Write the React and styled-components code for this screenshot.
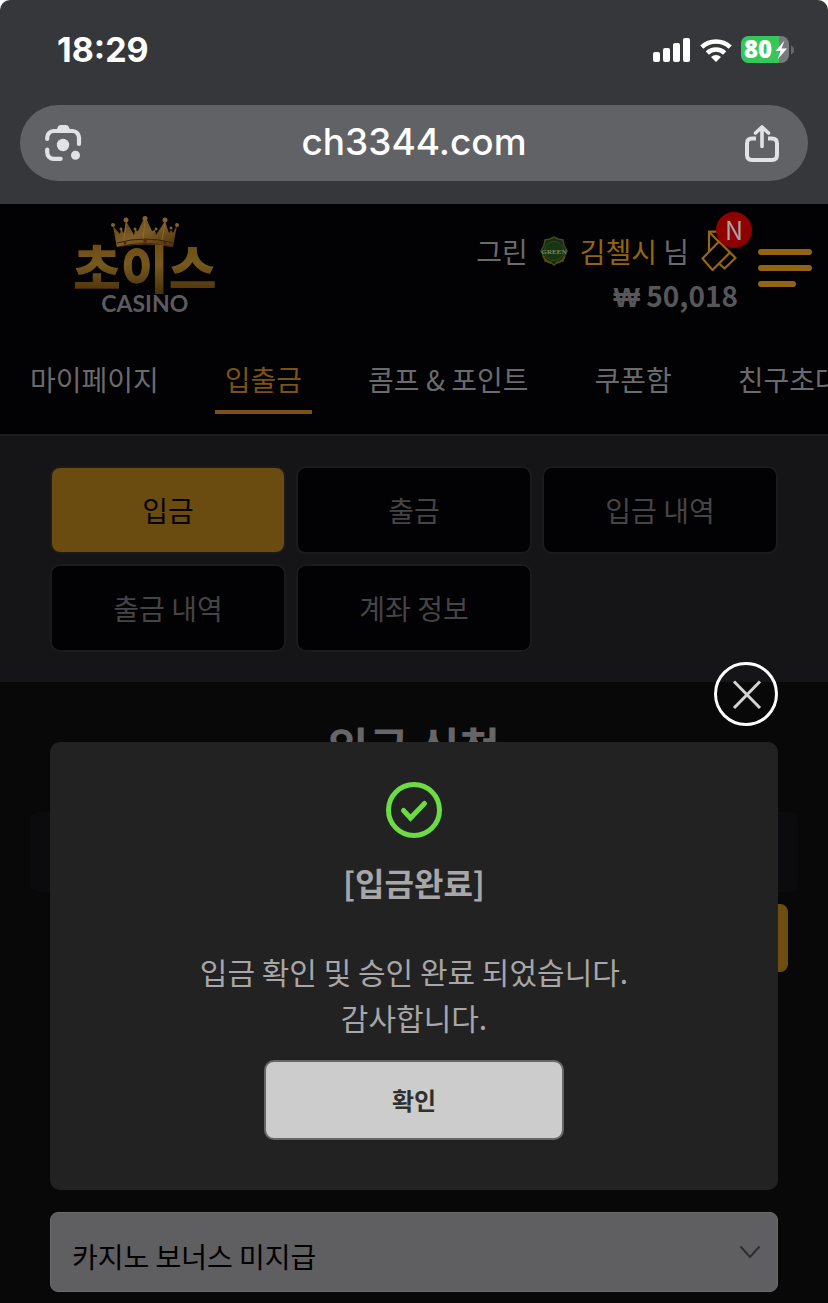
import React from "react";
import styled, { createGlobalStyle } from "styled-components";

const GlobalStyle = createGlobalStyle`
    *, *::before, *::after {
        box-sizing: border-box;
    }
    body {
        margin: 0;
        background: #fff;
        font-family: "Noto Sans CJK KR", sans-serif;
        font-size: 28px;
    }
    button, select {
        font: inherit;
    }
    h1, h2, p {
        margin: 0;
    }
`;

const Page = styled.div`
    --gold: #6a4b10;
    --gold-bright: #936512;
    --line: #1b1b1c;

    display: flex;
    flex-direction: column;
    min-height: 100vh;
    border-radius: 10px 10px 0 0;
    background: #36373b;
    overflow: hidden;
`;

/* browser chrome */

const StatusBar = styled.div`
    display: flex;
    align-items: center;
    justify-content: space-between;
    height: 105px;
    padding: 0 33px 6px 57px;
    color: #fff;
    font-family: Inter, sans-serif;
`;

const Clock = styled.time`
    font-size: 34px;
    font-weight: 700;
`;

const StatusIcons = styled.div`
    display: flex;
    align-items: center;
    gap: 9px;
`;

const AddressBar = styled.div`
    display: flex;
    align-items: center;
    justify-content: space-between;
    height: 76px;
    margin: 0 20px 23px;
    padding: 0 24px;
    border-radius: 38px;
    background: #616266;
`;

const Host = styled.span`
    color: #fff;
    font-family: Inter, sans-serif;
    font-size: 37px;
    font-weight: 500;
    line-height: 72px;
    padding-bottom: 2px;
`;

const IconButton = styled.button`
    display: flex;
    padding: 0;
    border: 0;
    background: none;
    color: #e2e2e6;
    cursor: pointer;
`;

/* site */

const Site = styled.div`
    position: relative;
    flex: 1;
    background: #090809;
`;

const Header = styled.header`
    display: flex;
    align-items: flex-start;
    height: 156px;
    padding: 0 16px 0 73px;
    background: #020103;
`;

const Logo = styled.a`
    display: flex;
    flex-direction: column;
    align-items: center;
    padding-top: 12px;
    margin-right: auto;
    text-decoration: none;
`;

const LogoName = styled.span`
    margin-top: -10px;
    background: linear-gradient(#6d4a12, #76591f 45%, #4a300a);
    background-clip: text;
    color: transparent;
    font-size: 52px;
    font-weight: 900;
    line-height: 54px;
`;

const LogoSub = styled.span`
    margin-top: -2px;
    color: #5c5b5e;
    font-family: Lato, sans-serif;
    font-size: 23px;
    font-weight: 700;
    line-height: 22px;
`;

const Account = styled.div`
    display: flex;
    flex-direction: column;
    align-items: flex-end;
    padding-top: 25px;
    line-height: 44px;
    color: #6b6a6d;
`;

const AccountRow = styled.div`
    display: flex;
    align-items: center;
    gap: 12px;
`;

const UserName = styled.strong`
    color: var(--gold-bright);
    font-weight: 400;
`;

const Balance = styled.div`
    color: #575659;
    font-weight: 700;
`;

const Won = styled.span`
    font-family: "Open Sans", sans-serif;
    font-weight: 600;
`;

const Coupon = styled.a`
    position: relative;
    display: flex;
`;

const CouponBadge = styled.span`
    position: absolute;
    top: -17px;
    right: -14px;
    width: 36px;
    height: 36px;
    border-radius: 50%;
    background: #8f0000;
    color: #a5a4a6;
    font-size: 25px;
    line-height: 34px;
    text-align: center;
`;

const MenuButton = styled.button`
    display: flex;
    flex-direction: column;
    gap: 10px;
    width: 54px;
    margin: 45px 0 0 20px;
    padding: 0;
    border: 0;
    background: none;
    cursor: pointer;
`;

const MenuLine = styled.span`
    width: ${(props) => (props.$short ? "38px" : "100%")};
    height: 6px;
    border-radius: 3px;
    background: var(--gold-bright);
`;

const Nav = styled.nav`
    display: flex;
    gap: 46px;
    padding: 0 0 20px 20px;
    background: #020103;
    overflow: hidden;
`;

const NavLink = styled.a`
    flex: none;
    padding: 0 10px 12px;
    border-bottom: 4px solid ${(props) => (props.$active ? "#7a5215" : "transparent")};
    color: ${(props) => (props.$active ? "#7a5215" : "#6b6a6c")};
    line-height: 38px;
    text-decoration: none;
    white-space: nowrap;
`;

const Tabs = styled.div`
    display: grid;
    grid-template-columns: repeat(3, 1fr);
    gap: 10px;
    padding: 30px 50px;
    border-top: 2px solid var(--line);
    background: #151416;
`;

const Tab = styled.button`
    height: 88px;
    padding: 0;
    border: 2px solid var(--line);
    border-radius: 10px;
    background: ${(props) => (props.$active ? "var(--gold)" : "#020103")};
    color: ${(props) => (props.$active ? "#050300" : "#454446")};
    cursor: pointer;
`;

const Content = styled.main`
    padding: 32px 30px 11px;
`;

const Title = styled.h1`
    color: #666567;
    font-size: 44px;
    font-weight: 700;
    line-height: 64px;
    text-align: center;
`;

const Field = styled.div`
    height: 80px;
    margin: 34px 0 12px;
    border-radius: 8px;
    background: #0b0a0c;
`;

const AmountButton = styled.button`
    display: block;
    width: 140px;
    height: 68px;
    margin: 0 10px 0 auto;
    border: 0;
    border-radius: 8px;
    background: #6f4d10;
`;

const SelectBox = styled.div`
    position: relative;
    margin: 240px 20px 0;
    color: #2d2c2e;

    select {
        display: block;
        width: 100%;
        height: 80px;
        padding: 8px 60px 0 21px;
        border: 1px solid #6b6a6c;
        border-radius: 8px;
        appearance: none;
        background: #5f5e60;
        color: #000;
    }
    svg {
        position: absolute;
        top: 32px;
        right: 16px;
        pointer-events: none;
    }
`;

/* dialog */

const Overlay = styled.div`
    position: absolute;
    inset: 0;
    display: flex;
    flex-direction: column;
    gap: 16px;
    padding: 458px 50px 0;
`;

const CloseButton = styled(IconButton)`
    align-self: flex-end;
    color: #fff;
`;

const Dialog = styled.section`
    display: flex;
    flex-direction: column;
    align-items: center;
    padding: 40px 20px 50px;
    border-radius: 10px;
    background: #232223;
    color: #a7a6a8;
    text-align: center;
`;

const DialogTitle = styled.h2`
    margin-top: 20px;
    font-size: 32px;
    font-weight: 700;
    line-height: 48px;
`;

const DialogText = styled.p`
    margin: 42px 0 20px;
    font-size: 30px;
    line-height: 46px;
`;

const ConfirmButton = styled.button`
    width: 300px;
    max-width: 100%;
    height: 80px;
    padding: 0 0 2px;
    border: 2px solid #666567;
    border-radius: 10px;
    background: #ccc;
    color: #2f2f2f;
    font-size: 24px;
    font-weight: 700;
    cursor: pointer;
`;

const SignalIcon = () => (
    <svg width='38' height='24' viewBox='0 0 38 24' fill='currentColor'>
        <rect x='0' y='14' width='7' height='10' rx='2' />
        <rect x='10' y='10' width='7' height='14' rx='2' />
        <rect x='20' y='5' width='7' height='19' rx='2' />
        <rect x='30' y='0' width='7' height='24' rx='2' />
    </svg>
);

const WifiIcon = () => (
    <svg width='32' height='24' viewBox='0 0 32 24' fill='none' stroke='currentColor' strokeWidth='4.6'>
        <path d='M1.8 9.2a20.5 20.5 0 0 1 28.4 0' />
        <path d='M7.3 15a12.6 12.6 0 0 1 17.4 0' />
        <path d='M16 24l-5-5a7.4 7.4 0 0 1 10 0z' fill='currentColor' stroke='none' />
    </svg>
);

const BatteryIcon = () => (
    <svg width='54' height='28' viewBox='0 0 54 28'>
        <defs>
            <clipPath id='battery'>
                <rect y='0' width='48' height='27' rx='8' />
            </clipPath>
        </defs>
        <g clipPath='url(#battery)'>
            <rect width='48' height='27' fill='#7a7a7d' />
            <rect width='38' height='27' fill='#35c759' />
        </g>
        <path d='M50 9.5q3 1 3 4.5t-3 4.5z' fill='#69696c' />
        <text x='3' y='22' fill='#fff' fontFamily='Open Sans, sans-serif' fontSize='24' fontWeight='800'>
            80
        </text>
        <path d='M43.5 4.5L34.5 15h5l-3 8.5L46 12.5h-5.5z' fill='#fff' />
    </svg>
);

const LensIcon = () => (
    <svg width='44' height='38' viewBox='0 0 44 38' fill='none' stroke='currentColor' strokeWidth='4.2' strokeLinecap='round'>
        <path d='M3.2 15v-1.5a6.5 6.5 0 0 1 6.5-6.5h18.8a6.5 6.5 0 0 1 6.5 6.5V20' />
        <path d='M12 7.5l1.8-4.6Q14.5 1 16.5 1h5.5q2 0 2.8 1.9L27 7.5z' fill='currentColor' stroke='none' />
        <path d='M3.2 25.5v2.8a6.5 6.5 0 0 0 6.5 6.5h7' />
        <circle cx='19' cy='21' r='6.2' fill='currentColor' stroke='none' />
        <circle cx='31.5' cy='31.3' r='4.5' fill='currentColor' stroke='none' />
    </svg>
);

const ShareIcon = () => (
    <svg width='44' height='38' viewBox='0 0 44 38' fill='none' stroke='currentColor' strokeWidth='4' strokeLinecap='round' strokeLinejoin='round'>
        <path d='M16 14.5h-4q-5 0-5 5V31q0 5 5 5h20q5 0 5-5V19.5q0-5-5-5h-4' strokeLinecap='butt' />
        <path d='M22 22.5V3.5M15.5 9L22 3l6.5 6' strokeWidth='3.6' />
    </svg>
);

const CrownIcon = () => (
    <svg width='68' height='34' viewBox='0 0 68 34'>
        <defs>
            <linearGradient id='crown' x1='0' y1='0' x2='1' y2='1'>
                <stop offset='0' stopColor='#5c3a10' />
                <stop offset='.5' stopColor='#7d5e28' />
                <stop offset='1' stopColor='#4a2e0a' />
            </linearGradient>
        </defs>
        <path
            d='M6 32L2 10l7 8 1-5 3 4 2-12 8 14 1-5 3 1 7-15 7 15 3-1 1 5 9-14 4 12 2-3 2 3 4-8-4 22q-27-5-56 0z'
            fill='url(#crown)'
        />
        <path d='M6 27q28-8 56 0M7 31q28-7 54 0' fill='none' stroke='#382207' strokeWidth='1' />
        <path d='M15 7l-2 17M34 5l-2 18M54 7l-3 17' fill='none' stroke='#8a6a30' strokeWidth='1' />
        <g fill='#85602a'>
            <circle cx='2' cy='9' r='2' />
            <circle cx='15' cy='4' r='2.5' />
            <circle cx='34' cy='2.5' r='2.5' />
            <circle cx='54' cy='4' r='2.5' />
            <circle cx='66' cy='9' r='2' />
            <circle cx='10' cy='13' r='1.5' />
            <circle cx='24' cy='13' r='1.5' />
            <circle cx='45' cy='13' r='1.5' />
            <circle cx='60' cy='12' r='1.5' />
        </g>
        <g fill='#5e2119'>
            <circle cx='14' cy='27' r='1.5' />
            <circle cx='34' cy='25' r='1.8' />
            <circle cx='54' cy='27' r='1.5' />
        </g>
    </svg>
);

const GradeIcon = () => (
    <svg width='28' height='30' viewBox='0 0 28 30'>
        <path
            d='M14 1l4 2 5 1 1 5 3 6-3 6-1 4-5 1-4 3-4-3-5-1-1-4-3-6 3-6 1-5 5-1z'
            fill='#162c13'
            stroke='#3f4a22'
            strokeWidth='1.5'
        />
        <circle cx='14' cy='15' r='9.5' fill='#17350f' stroke='#2c4d24' />
        <path d='M3 20q3 6 9 7M25 20q-3 6-9 7' fill='none' stroke='#5a4313' strokeWidth='2' />
        <text x='14' y='17.5' fill='#7c8370' fontFamily='Liberation Serif, serif' fontSize='7' fontWeight='700' textAnchor='middle'>
            GREEN
        </text>
    </svg>
);

const CouponIcon = () => (
    <svg width='37' height='44' viewBox='0 0 37 44' fill='none' stroke='#946712' strokeWidth='2.2' strokeLinejoin='round'>
        <path d='M1.5 29.5L18 12.5 29 23.5 11.5 41z' />
        <path d='M18 34.5l5.5 5L34.5 29l-6.5-6.5' />
        <path d='M8 22.5V2.7h12M8 2.7L19 14' />
    </svg>
);

const CloseIcon = () => (
    <svg width='64' height='64' viewBox='0 0 64 64' fill='none' stroke='currentColor'>
        <circle cx='32' cy='32' r='30.5' strokeWidth='3' />
        <path d='M20 19.5l26 26.5M46 19.5L20 46' stroke='#d4d4d4' strokeWidth='3' />
    </svg>
);

const CheckIcon = () => (
    <svg width='56' height='56' viewBox='0 0 56 56' fill='none' stroke='#6bdc43' strokeWidth='5'>
        <circle cx='28' cy='28' r='25.5' />
        <path d='M17.5 28.5l7 7.5L38.5 21.500' strokeLinecap='round' />
    </svg>
);

const ChevronIcon = () => (
    <svg width='24' height='16' viewBox='0 0 24 16' fill='none' stroke='currentColor' strokeWidth='2'>
        <path d='M2.5 2.5L12 13l9.5-10.5' />
    </svg>
);

const navItems = ["마이페이지", "입출금", "콤프 & 포인트", "쿠폰함", "친구초대"];
const tabItems = ["입금", "출금", "입금 내역", "출금 내역", "계좌 정보"];

export default () => (
    <Page>
        <GlobalStyle />
        <StatusBar>
            <Clock>18:29</Clock>
            <StatusIcons>
                <SignalIcon />
                <WifiIcon />
                <BatteryIcon />
            </StatusIcons>
        </StatusBar>
        <AddressBar>
            <IconButton aria-label='Lens'>
                <LensIcon />
            </IconButton>
            <Host>ch3344.com</Host>
            <IconButton aria-label='Share'>
                <ShareIcon />
            </IconButton>
        </AddressBar>
        <Site>
            <Header>
                <Logo href='#'>
                    <CrownIcon />
                    <LogoName>초이스</LogoName>
                    <LogoSub>CASINO</LogoSub>
                </Logo>
                <Account>
                    <AccountRow>
                        <span>그린</span>
                        <GradeIcon />
                        <span>
                            <UserName>김첼시</UserName> 님
                        </span>
                        <Coupon href='#' aria-label='쿠폰'>
                            <CouponIcon />
                            <CouponBadge>N</CouponBadge>
                        </Coupon>
                    </AccountRow>
                    <Balance>
                        <Won>₩</Won> 50,018
                    </Balance>
                </Account>
                <MenuButton aria-label='메뉴'>
                    <MenuLine />
                    <MenuLine />
                    <MenuLine $short />
                </MenuButton>
            </Header>
            <Nav>
                {navItems.map((item) => (
                    <NavLink key={item} href='#' $active={item === "입출금"}>
                        {item}
                    </NavLink>
                ))}
            </Nav>
            <Tabs>
                {tabItems.map((item) => (
                    <Tab key={item} $active={item === "입금"}>
                        {item}
                    </Tab>
                ))}
            </Tabs>
            <Content>
                <Title>입금 신청</Title>
                <Field />
                <AmountButton aria-label='금액' />
                <SelectBox>
                    <select aria-label='보너스'>
                        <option>카지노 보너스 미지급</option>
                    </select>
                    <ChevronIcon />
                </SelectBox>
            </Content>
            <Overlay>
                <CloseButton aria-label='닫기'>
                    <CloseIcon />
                </CloseButton>
                <Dialog role='dialog' aria-labelledby='dialog-title'>
                    <CheckIcon />
                    <DialogTitle id='dialog-title'>[입금완료]</DialogTitle>
                    <DialogText>
                        입금 확인 및 승인 완료 되었습니다.
                        <br />
                        감사합니다.
                    </DialogText>
                    <ConfirmButton>확인</ConfirmButton>
                </Dialog>
            </Overlay>
        </Site>
    </Page>
);
